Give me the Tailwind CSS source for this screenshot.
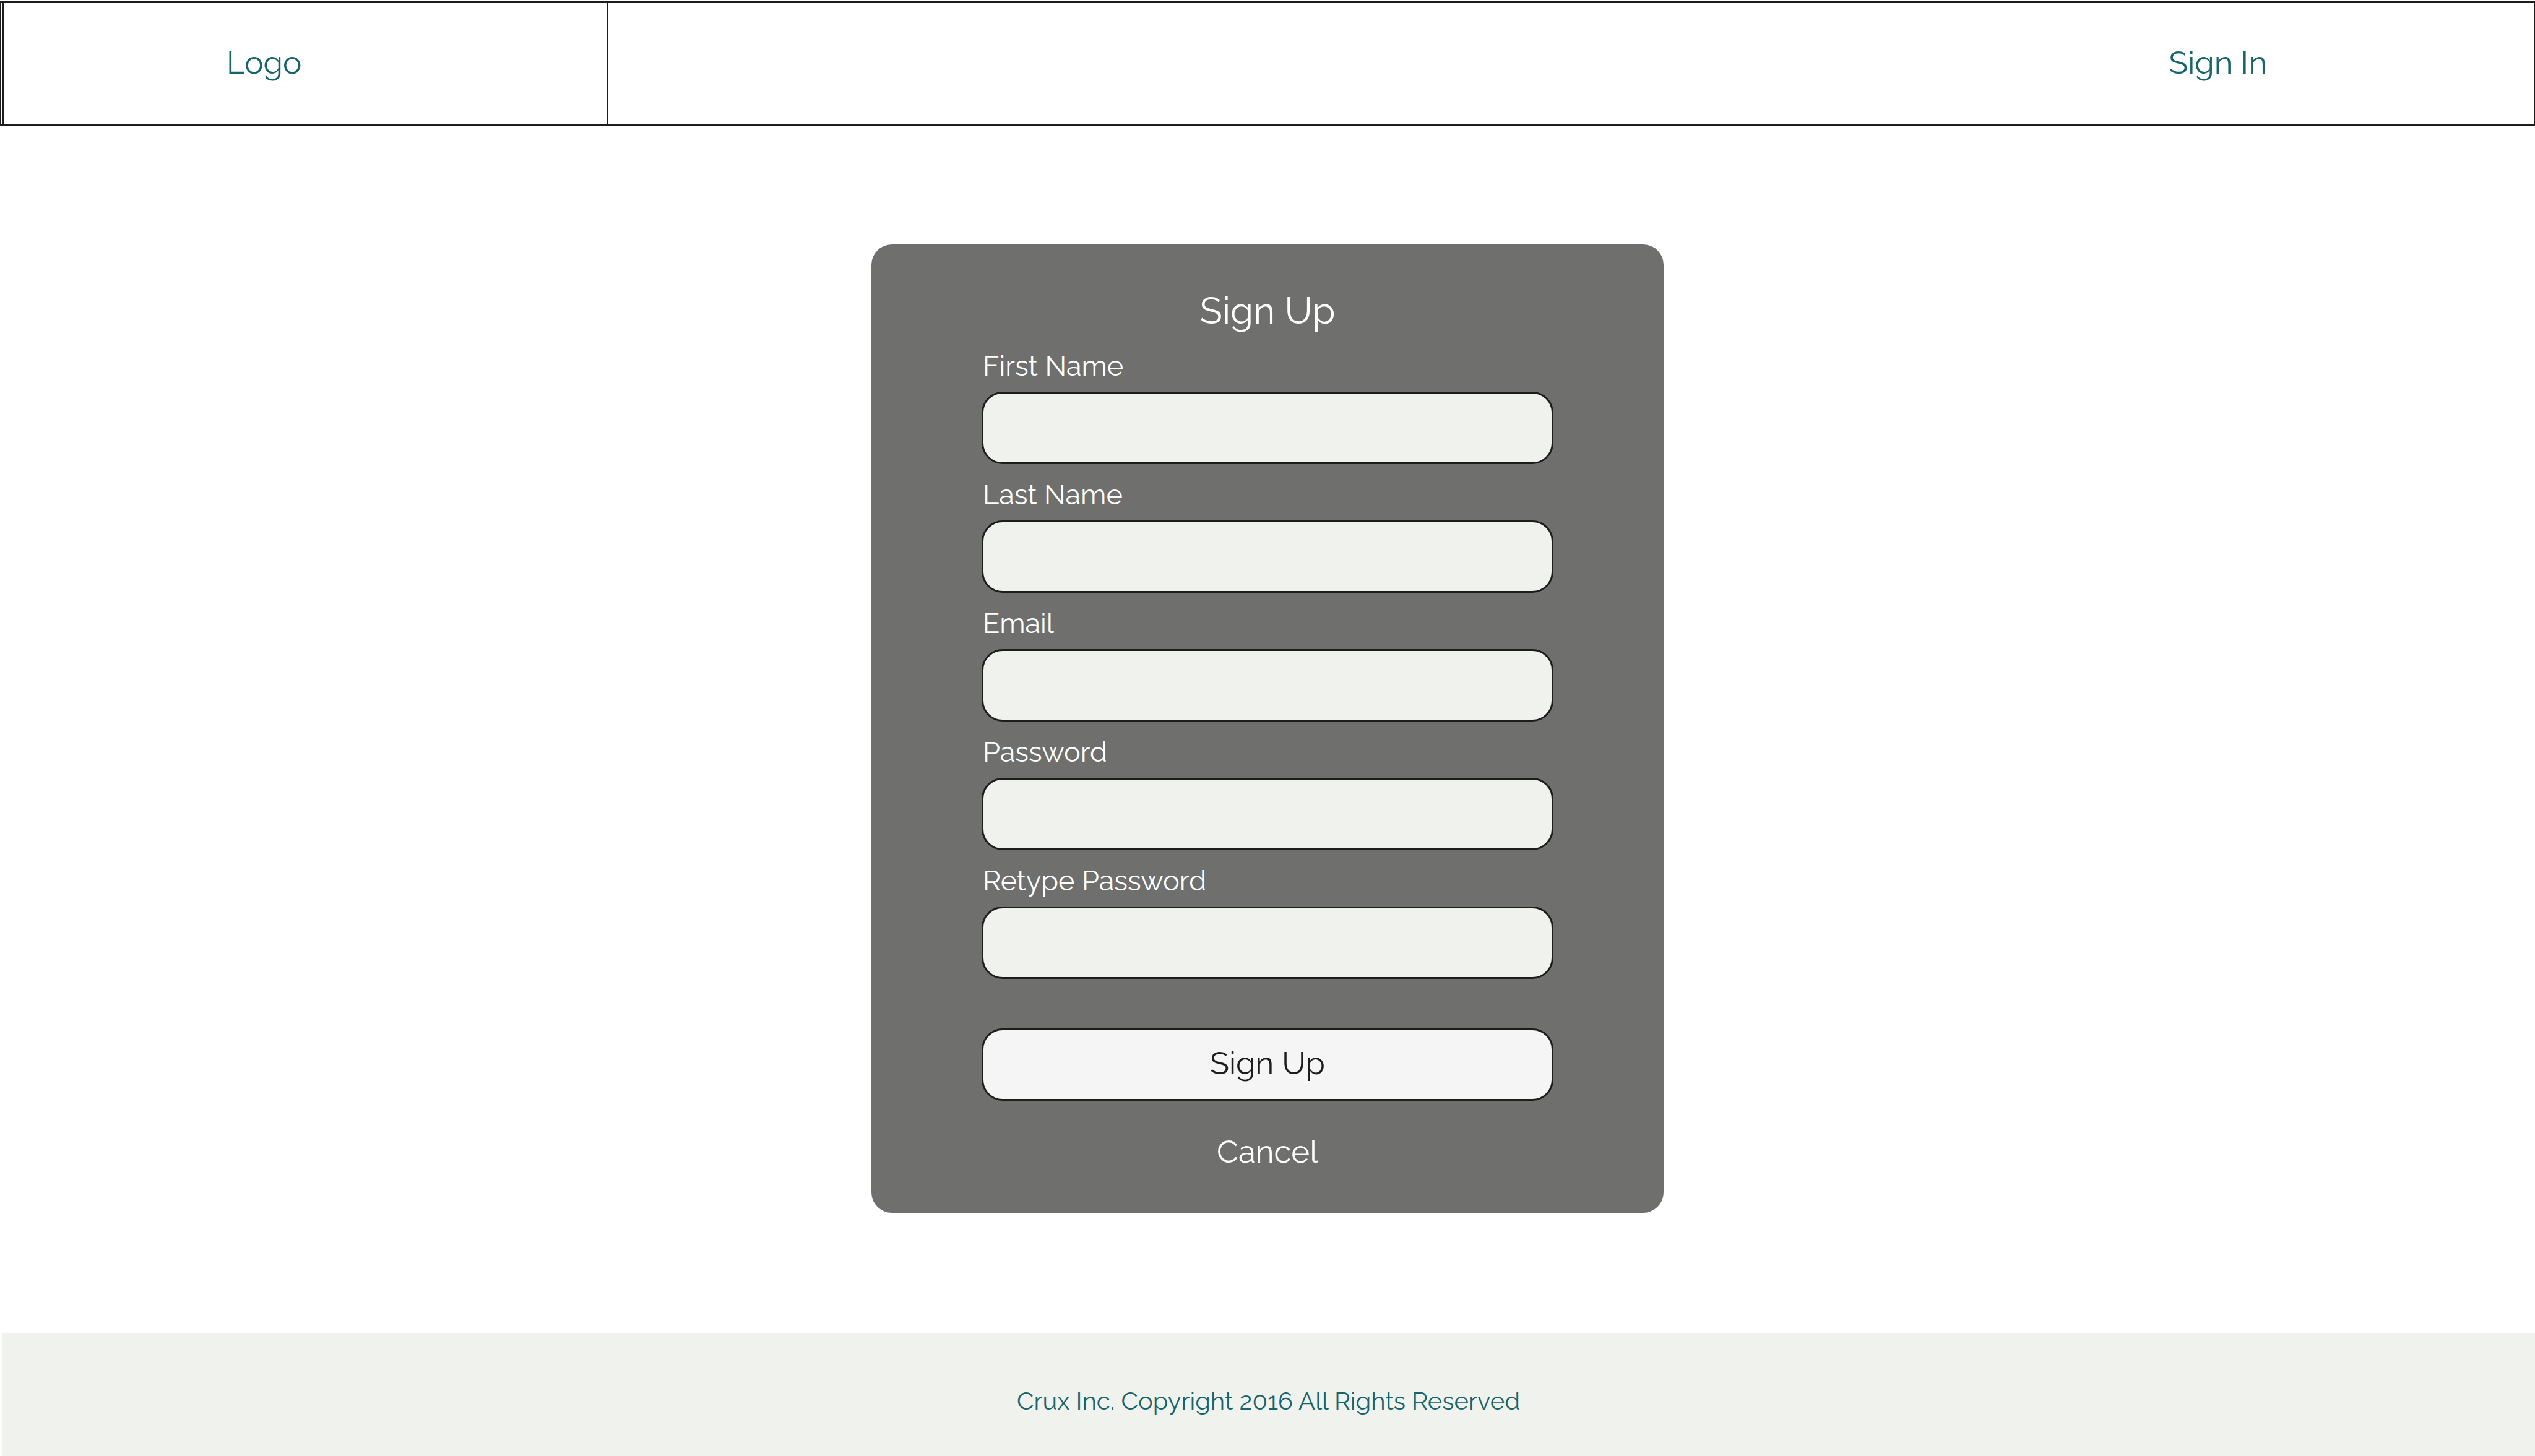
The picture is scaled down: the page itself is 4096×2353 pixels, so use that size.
<!DOCTYPE html>
<html lang="en">
<head>
<meta charset="utf-8">
<meta name="viewport" content="width=device-width, initial-scale=1">
<title>Sign Up</title>
<script src="https://cdn.jsdelivr.net/npm/@tailwindcss/browser@4"></script>
</head>
<body class="flex min-h-screen flex-col bg-white font-['Raleway','Lato',sans-serif] text-[#1d1d1b]">
  <header class="mt-[2px] flex h-[202px] items-stretch justify-between border-x border-y-3 border-[#1d1d1b] text-[51px] leading-[64px] text-[#17656b]">
    <div class="ml-[2px] flex w-[980px] items-center border-x-3 border-[#1d1d1b] pb-[5px] pl-[360px]">
      <a href="#">Logo</a>
    </div>
    <nav class="flex items-center pr-[432px] pb-[5px]">
      <a href="#">Sign In</a>
    </nav>
  </header>

  <main class="flex flex-1 flex-col items-center pt-[191px] pb-[194px]">
    <form class="flex w-[1280px] max-w-full flex-col rounded-[33px] bg-[#6f6f6d] px-[178px] pt-[71px] pb-[67px] text-white">
      <h1 class="mb-[25px] text-center text-[60px] leading-[72px]">Sign Up</h1>
      <div class="flex flex-col gap-[21px] text-[45px] leading-[58px]">
        <div class="flex flex-col gap-[12px]">
          <label for="first-name" class="pl-[2px]">First Name</label>
          <input id="first-name" type="text" class="h-[117px] w-full rounded-[34px] border-3 border-[#1d1d1b] bg-[#f0f2ed] px-8 text-[#1d1d1b]">
        </div>
        <div class="flex flex-col gap-[12px]">
          <label for="last-name" class="pl-[2px]">Last Name</label>
          <input id="last-name" type="text" class="h-[117px] w-full rounded-[34px] border-3 border-[#1d1d1b] bg-[#f0f2ed] px-8 text-[#1d1d1b]">
        </div>
        <div class="flex flex-col gap-[12px]">
          <label for="email" class="pl-[2px]">Email</label>
          <input id="email" type="email" class="h-[117px] w-full rounded-[34px] border-3 border-[#1d1d1b] bg-[#f0f2ed] px-8 text-[#1d1d1b]">
        </div>
        <div class="flex flex-col gap-[12px]">
          <label for="password" class="pl-[2px]">Password</label>
          <input id="password" type="password" class="h-[117px] w-full rounded-[34px] border-3 border-[#1d1d1b] bg-[#f0f2ed] px-8 text-[#1d1d1b]">
        </div>
        <div class="flex flex-col gap-[12px]">
          <label for="retype-password" class="pl-[2px]">Retype Password</label>
          <input id="retype-password" type="password" class="h-[117px] w-full rounded-[34px] border-3 border-[#1d1d1b] bg-[#f0f2ed] px-8 text-[#1d1d1b]">
        </div>
      </div>
      <button type="submit" class="mt-[80px] h-[117px] w-full rounded-[34px] border-3 border-[#1d1d1b] bg-[#f5f5f5] pb-[6px] text-[51px] leading-[64px] text-[#1d1d1b]">Sign Up</button>
      <a href="#" class="mt-[50px] self-center text-[51px] leading-[64px]">Cancel</a>
    </form>
  </main>

  <footer class="ml-[3px] flex h-[199px] items-center justify-center bg-[#f0f2ed] pt-[20px] text-[#17656b]">
    <p class="text-[40px] leading-[50px]">Crux Inc. Copyright 2016 All Rights Reserved</p>
  </footer>
</body>
</html>
